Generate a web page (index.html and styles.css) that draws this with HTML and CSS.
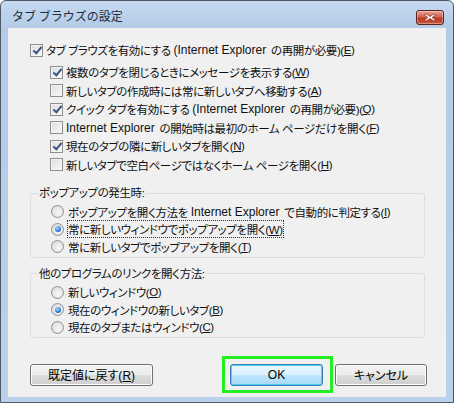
FILE: index.html
```html
<!DOCTYPE html>
<html>
<head>
  <title>タブ ブラウズの設定</title>
  <link rel="stylesheet" href="styles.css">
</head>
<body>
  <div class="window">
    <div class="titlebar">
      <span class="title">タブ ブラウズの設定</span>
      <span class="close">
        <svg width="14" height="9" viewBox="0 0 14 9">
          <path d="M3 1 L7 3.5 L11 1 L12.5 2 L9 4.5 L12.5 7 L11 8 L7 5.5 L3 8 L1.5 7 L5 4.5 L1.5 2 Z" fill="#fff" stroke="#7a2a20" stroke-width="0.6"/>
        </svg>
      </span>
    </div>
    <div class="client">
      <div class="row main"><span class="box checked"></span>タブ ブラウズを有効にする <span class="en">(Internet Explorer</span> の再開が必要)(<u>E</u>)</div>
      <div class="sub">
        <div class="row"><span class="box checked"></span>複数のタブを閉じるときにメッセージを表示する(<u>W</u>)</div>
        <div class="row"><span class="box"></span>新しいタブの作成時には常に新しいタブへ移動する(<u>A</u>)</div>
        <div class="row"><span class="box checked"></span>クイック タブを有効にする <span class="en">(Internet Explorer</span> の再開が必要)(<u>Q</u>)</div>
        <div class="row"><span class="box"></span><span class="en">Internet Explorer</span> の開始時は最初のホーム ページだけを開く(<u>F</u>)</div>
        <div class="row"><span class="box checked"></span>現在のタブの隣に新しいタブを開く(<u>N</u>)</div>
        <div class="row"><span class="box"></span>新しいタブで空白ページではなくホーム ページを開く(<u>H</u>)</div>
      </div>

      <fieldset class="group first">
        <legend>ポップアップの発生時:</legend>
        <div class="row"><span class="radio"></span>ポップアップを開く方法を <span class="en">Internet Explorer</span> で自動的に判定する(<u>I</u>)</div>
        <div class="row"><span class="radio on"></span><span class="focus">常に新しいウィンドウでポップアップを開く(<u>W</u>)</span></div>
        <div class="row"><span class="radio"></span>常に新しいタブでポップアップを開く(<u>T</u>)</div>
      </fieldset>

      <fieldset class="group">
        <legend>他のプログラムのリンクを開く方法:</legend>
        <div class="row"><span class="radio"></span>新しいウィンドウ(<u>O</u>)</div>
        <div class="row"><span class="radio on"></span>現在のウィンドウの新しいタブ(<u>B</u>)</div>
        <div class="row"><span class="radio"></span>現在のタブまたはウィンドウ(<u>C</u>)</div>
      </fieldset>

      <div class="buttons">
        <button class="btn reset">既定値に戻す(<u>R</u>)</button>
        <div class="right">
          <span class="highlight"><button class="btn ok">OK</button></span>
          <button class="btn cancel">キャンセル</button>
        </div>
      </div>
    </div>
  </div>
</body>
</html>
```

FILE: styles.css
```css
body {
  margin: 0;
  font-family: "Liberation Sans", "Noto Sans CJK JP", sans-serif;
  font-size: 12px;
  color: #000;
}

.window {
  width: 454px;
  height: 403px;
  box-sizing: border-box;
  border: 1px solid #4f5864;
  border-radius: 6px 6px 0 0;
  background: linear-gradient(#c6daf0, #b3cbe6 28px, #b9d1ea);
  padding: 0 7px 5px 7px;
  display: flex;
  flex-direction: column;
}

.titlebar {
  height: 27px;
  display: flex;
  justify-content: space-between;
  align-items: flex-start;
}

.title {
  margin: 7px 0 0 4px;
  line-height: 16px;
  font-family: "Noto Sans CJK JP", sans-serif;
  color: #1e2a3a;
}

.close {
  width: 26px;
  height: 13px;
  margin: 9px 2px 0 0;
  border: 1px solid #5b2018;
  border-radius: 3px;
  background: linear-gradient(#e6a497, #d1624f 45%, #b83a22 55%, #c8583c);
  display: flex;
  align-items: center;
  justify-content: center;
  box-shadow: inset 0 0 0 1px rgba(255, 255, 255, 0.35);
}

.client {
  flex: 1;
  background-color: #f0f0f0;
  padding: 13px 21px 0 22px;
  font-size: 11.5px;
  letter-spacing: -0.4px;
  font-feature-settings: "palt";
  color: #111;
}

.en {
  letter-spacing: 0;
  font-size: 12px;
  margin-right: 2px;
}

.row {
  display: flex;
  align-items: center;
  height: 18.5px;
  white-space: pre;
}

.main {
  height: 18px;
}

.sub {
  margin-top: 4px;
  padding-left: 20px;
}

.box {
  width: 11px;
  height: 11px;
  border: 1px solid #8e8f8f;
  background: linear-gradient(135deg, #dcdcdc, #fbfbfb);
  box-shadow: inset 0 0 0 1px #f4f4f4;
  margin-right: 3px;
  flex-shrink: 0;
  position: relative;
}

.box.checked::after {
  content: "";
  position: absolute;
  left: 4px;
  top: 0;
  width: 3px;
  height: 7px;
  border: solid #3c5486;
  border-width: 0 2px 2px 0;
  transform: rotate(40deg);
}

.group {
  margin: 12px 0 0 0;
  padding: 3px 0 1px 20px;
  border: 1px solid #d5dfe5;
  border-radius: 3px;
}

.group legend {
  padding: 0 1px;
  margin-left: -13px;
  line-height: 14px;
}

.group .row {
  height: 17.5px;
}

.group.first + .group {
  margin-top: 9px;
}

.radio {
  width: 11px;
  height: 11px;
  border: 1px solid #8e8f8f;
  border-radius: 50%;
  background: radial-gradient(circle at 60% 60%, #f8f8f8, #d6d6d6);
  margin-right: 4px;
  flex-shrink: 0;
  position: relative;
}

.radio.on::after {
  content: "";
  position: absolute;
  left: 2.5px;
  top: 2.5px;
  width: 6px;
  height: 6px;
  border-radius: 50%;
  background: radial-gradient(circle at 40% 35%, #a8dcff, #2a7ad8 60%, #0d3f94);
}

.focus {
  outline: 1px dotted #333;
  outline-offset: 0;
}

.buttons {
  margin: 18px -2px 0 0;
  display: flex;
  justify-content: space-between;
  align-items: center;
}

.right {
  display: flex;
  align-items: center;
  gap: 2px;
}

.btn {
  height: 22px;
  font-family: inherit;
  font-size: 12px;
  letter-spacing: 0;
  font-feature-settings: "palt";
  border: 1px solid #707070;
  border-radius: 3px;
  background: linear-gradient(#f2f2f2, #ebebeb 50%, #dddddd 50%, #cfcfcf);
  box-shadow: inset 0 0 0 1px #fcfcfc;
  padding: 0;
  color: #000;
}

.reset {
  width: 123px;
}

.ok {
  width: 93px;
  border-color: #3c7fb1;
  box-shadow: inset 0 0 0 1px #48d0f8;
  background: linear-gradient(#eaf6fd, #d9f0fc 50%, #bee6fd 50%, #a7d9f5);
}

.cancel {
  width: 92px;
}

.highlight {
  display: flex;
  border: 3px solid #22ee22;
  padding: 5px 7px 4px 5px;
}
```
